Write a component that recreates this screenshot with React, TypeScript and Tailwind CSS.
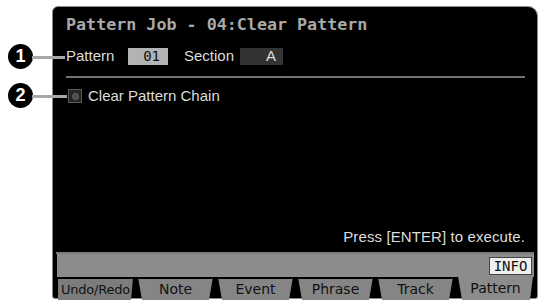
export default function App() {
  const tabs = ["Undo/Redo", "Note", "Event", "Phrase", "Track", "Pattern"];
  const sans = { fontFamily: '"Liberation Sans", Arial, sans-serif' };
  const mono = { fontFamily: '"DejaVu Sans Mono", "Liberation Mono", monospace' };
  const dv = { fontFamily: '"DejaVu Sans", "Liberation Sans", sans-serif' };
  return (
    <div className="relative w-[543px] h-[304px] bg-white overflow-hidden" style={sans}>
      <div className="ml-[52px] mt-[6px] w-[486px] h-[293px] bg-black border border-[#8a8a8a] rounded-tl-[6px] rounded-tr-[10px] rounded-b-[3px] flex flex-col">
        <div className="pl-[13px] pt-[7px] h-[27px] text-[16.7px] leading-[20px] font-bold text-[#a9a9a9] whitespace-nowrap" style={mono}>
          Pattern Job - 04:Clear Pattern
        </div>
        <div className="mt-[14px] h-[17px] flex items-stretch pl-[13px] text-[15px] text-[#dcdcdc]">
          <div className="w-[62px] flex items-center">Pattern</div>
          <div className="w-[40px] bg-[#b3b3b3] text-[#111] flex items-center justify-end pr-[8px] text-[14px]" style={mono}>01</div>
          <div className="ml-[16px] w-[56px] flex items-center">Section</div>
          <div className="w-[43px] bg-[#333] text-[#ddd] flex items-center justify-end pr-[7px]">A</div>
        </div>
        <div className="mt-[11px] ml-[13px] mr-[12px] h-[2px] bg-[#727272]" />
        <div className="mt-[11px] h-[14px] flex items-center pl-[15px] text-[15px] text-[#dcdcdc]">
          <div className="w-[14px] h-[14px] border border-[#5a5a5a] bg-[#262626] flex items-center justify-center">
            <div className="w-[7px] h-[7px] rounded-full bg-[#4a4a4a] border border-[#666]" />
          </div>
          <span className="ml-[6px] whitespace-nowrap">Clear Pattern Chain</span>
        </div>
        <div className="flex-1" />
        <div className="h-[18px] pr-[12px] flex items-center justify-end text-[15px] text-[#dcdcdc] whitespace-nowrap tracking-[0.1px]">
          Press [ENTER] to execute.
        </div>
        <div className="mt-[6px] mx-[3px] h-[2px] bg-[#7a7a7a]" />
        <div className="ml-[4px] mr-[3px] h-[23px] bg-[#8c8c8c] flex items-center justify-end pr-[2px]">
          <div className="w-[43px] h-[18px] bg-[#efefef] border border-[#444] flex items-center justify-center text-[14px] text-[#111] leading-none" style={mono}>
            INFO
          </div>
        </div>
        <div className="ml-[5px] mr-[4px] h-[21px] grid grid-cols-6 gap-[5px]" style={dv}>
          {tabs.map((t, i) => {
            const sel = i === tabs.length - 1;
            return (
              <div
                key={t}
                className={
                  sel
                    ? "bg-[#8c8c8c] flex items-center justify-center text-[14px] text-[#111] [clip-path:polygon(0_0,100%_0,calc(100%-3px)_100%,4px_100%)] -mt-[1px] whitespace-nowrap"
                    : i === 0
                    ? "bg-[#7c7c7c] border-t-2 border-black flex items-center justify-center text-[13px] text-[#111] [clip-path:polygon(0_0,100%_0,calc(100%-2px)_100%,0_100%)] whitespace-nowrap tracking-[-0.2px]"
                    : "bg-[#858585] border-t-2 border-black flex items-center justify-center text-[14px] text-[#111] [clip-path:polygon(0_0,100%_0,calc(100%-4px)_100%,4px_100%)] whitespace-nowrap"
                }
              >
                {t}
              </div>
            );
          })}
        </div>
      </div>

      <div className="absolute left-[8px] top-[44px] w-[25px] h-[25px] rounded-full bg-black text-white font-bold text-[18px] flex items-center justify-center">1</div>
      <div className="absolute left-[32px] top-[56px] w-[33px] h-[3px] bg-[#a8a8a8]" />
      <div className="absolute left-[8px] top-[83px] w-[25px] h-[25px] rounded-full bg-black text-white font-bold text-[18px] flex items-center justify-center">2</div>
      <div className="absolute left-[32px] top-[95px] w-[35px] h-[3px] bg-[#a8a8a8]" />
    </div>
  );
}
